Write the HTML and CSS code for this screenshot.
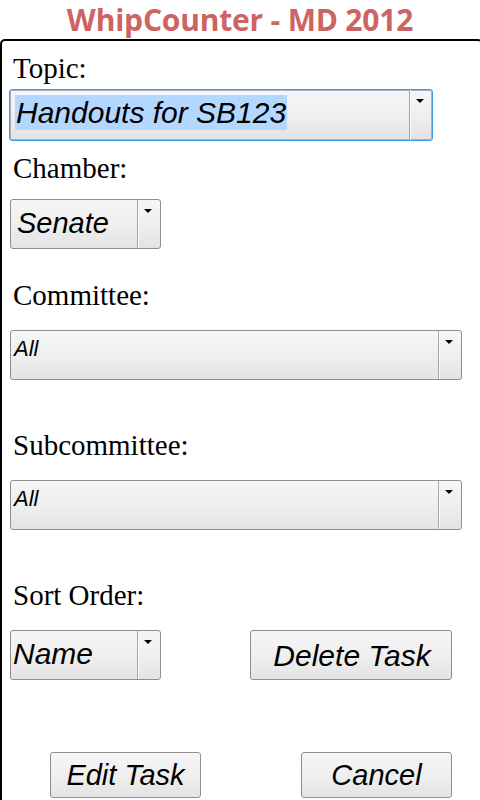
FILE: index.html
```html
<!DOCTYPE html>
<html>
<head>
<meta charset="utf-8">
<link rel="stylesheet" href="styles.css">
</head>
<body>
<h1 class="title">WhipCounter - MD 2012</h1>
<div class="frame">
  <div class="label label-first">Topic:</div>
  <div class="select select-topic">
    <div class="value value-topic"><span class="hl">Handouts for SB123</span></div>
    <div class="drop"><span class="arrow"></span></div>
  </div>

  <div class="label label-chamber">Chamber:</div>
  <div class="select select-small">
    <div class="value value-big">Senate</div>
    <div class="drop"><span class="arrow"></span></div>
  </div>

  <div class="label label-gap">Committee:</div>
  <div class="select select-wide">
    <div class="value value-small">All</div>
    <div class="drop"><span class="arrow"></span></div>
  </div>

  <div class="label label-gap2">Subcommittee:</div>
  <div class="select select-wide">
    <div class="value value-small">All</div>
    <div class="drop"><span class="arrow"></span></div>
  </div>

  <div class="label label-gap2">Sort Order:</div>
  <div class="row row-sort">
    <div class="select select-small">
      <div class="value value-big value-name">Name</div>
      <div class="drop"><span class="arrow"></span></div>
    </div>
    <div class="btn btn-delete">Delete Task</div>
  </div>

  <div class="row row-actions">
    <div class="btn btn-edit">Edit Task</div>
    <div class="btn btn-cancel">Cancel</div>
  </div>
</div>
</body>
</html>
```
FILE: styles.css
```css
html, body {
  margin: 0;
  padding: 0;
  background: #ffffff;
  overflow: hidden;
  width: 480px;
  height: 800px;
}

.title {
  margin: 0;
  height: 39px;
  padding-top: 1px;
  box-sizing: border-box;
  line-height: 38px;
  text-align: center;
  font-family: "Open Sans", "Liberation Sans", sans-serif;
  font-weight: 700;
  font-size: 30px;
  letter-spacing: -0.2px;
  color: #cd6464;
  white-space: nowrap;
}

.frame {
  width: 483px;
  height: 780px;
  box-sizing: border-box;
  border: 2px solid #000;
  border-radius: 5px 5px 0 0;
  padding-left: 8px;
}

.label {
  font-family: "Liberation Serif", "Times New Roman", serif;
  font-size: 29px;
  line-height: 32px;
  height: 32px;
  color: #000;
  white-space: nowrap;
  padding-left: 3px;
}

.label-first { margin-top: 11px; margin-bottom: 5px; }
.label-chamber { margin-top: 11px; margin-bottom: 15px; }
.label-gap { margin-top: 30px; margin-bottom: 19px; }
.label-gap2 { margin-top: 49px; margin-bottom: 19px; }

.select {
  display: flex;
  box-sizing: border-box;
  height: 50px;
  border: 1px solid #8f8f8f;
  border-radius: 3px;
  background: linear-gradient(#f6f6f6 0%, #efefef 50%, #e3e3e3 100%);
  overflow: hidden;
}

.select-topic {
  width: 424px;
  height: 52px;
  margin-left: -1px;
  border-color: #3d9ae6;
  box-shadow: inset 0 0 0 1px #9db4c9;
}

.select-small { width: 151px; }
.select-wide { width: 452px; }

.value {
  flex: 1;
  font-family: "Liberation Sans", Arial, sans-serif;
  font-style: italic;
  color: #000;
  white-space: nowrap;
}

.value-topic {
  font-size: 30px;
  line-height: 35px;
  padding: 5px 0 0 5px;
}

.hl {
  display: inline-block;
  background: #b3d7ff;
  padding-left: 1px;
  padding-right: 1px;
}

.value-big {
  font-size: 29px;
  line-height: 40px;
  padding: 3px 0 0 6px;
}

.value-name { font-size: 30px; padding-left: 2px; }

.value-small {
  font-size: 22px;
  line-height: 24px;
  padding: 6px 0 0 3px;
}

.drop {
  width: 22px;
  flex: none;
  border-left: 1px solid #a7a7a7;
  box-shadow: inset 1px 0 0 #f8f8f8;
  position: relative;
}

.arrow {
  position: absolute;
  left: 6px;
  top: 9px;
  width: 0;
  height: 0;
  border-left: 4px solid transparent;
  border-right: 4px solid transparent;
  border-top: 4px solid #000;
}

.row {
  display: flex;
  align-items: flex-start;
}

.btn {
  box-sizing: border-box;
  display: flex;
  align-items: center;
  justify-content: center;
  border: 1px solid #8f8f8f;
  border-radius: 3px;
  background: linear-gradient(#f6f6f6 0%, #efefef 50%, #e3e3e3 100%);
  font-family: "Liberation Sans", Arial, sans-serif;
  font-style: italic;
  font-size: 29px;
  color: #000;
  white-space: nowrap;
}

.btn-delete {
  width: 202px;
  height: 50px;
  margin-left: 89px;
  padding-top: 2px;
  padding-left: 2px;
  font-size: 30px;
}

.row-actions {
  margin-top: 72px;
}

.btn-edit {
  width: 151px;
  height: 46px;
  margin-left: 40px;
}

.btn-cancel {
  width: 151px;
  height: 46px;
  margin-left: 100px;
}
```
